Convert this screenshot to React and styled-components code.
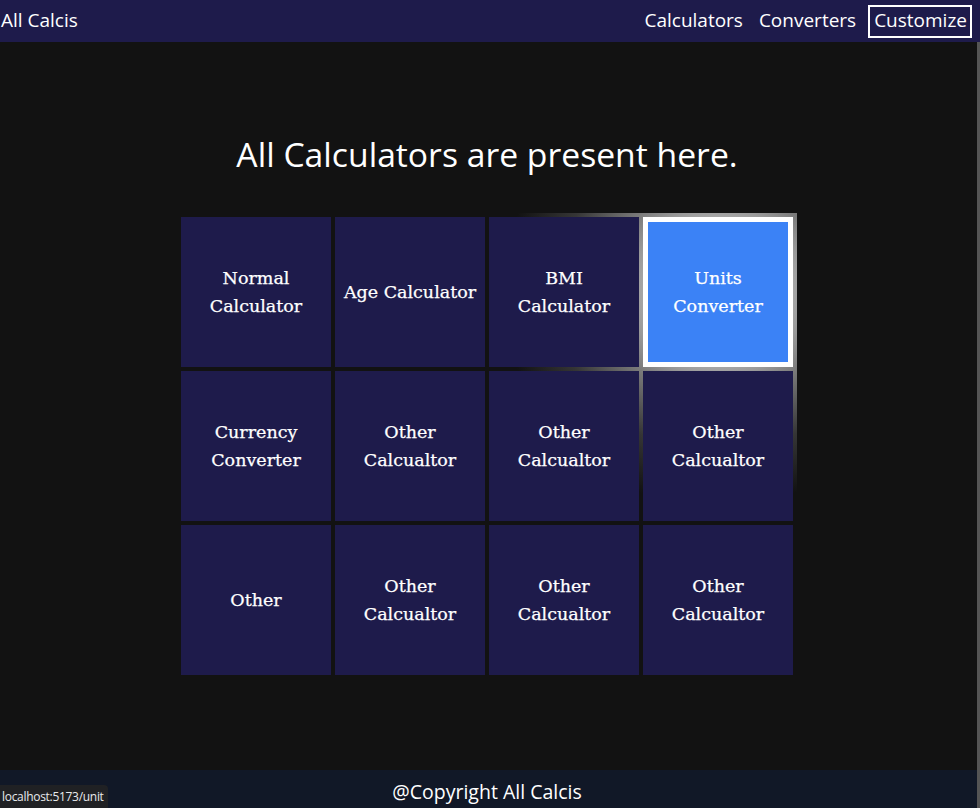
import React from 'react'
import styled, { createGlobalStyle } from 'styled-components'

const indigo = '#1e1b4b'
const page = '#121212'
const blue = '#3b82f6'

const GlobalStyle = createGlobalStyle`
  html, body {
    margin: 0;
    padding: 0;
    background: ${page};
    font-family: "Open Sans", "Noto Sans", sans-serif;
    color: #fff;
  }
  * { box-sizing: border-box; }
`

const Shell = styled.div`
  display: flex;
  flex-direction: column;
  height: 808px;
  overflow: hidden;
  position: relative;
`

const Nav = styled.nav`
  display: flex;
  justify-content: space-between;
  align-items: center;
  height: 42px;
  background: ${indigo};
  padding: 0 8px 0 0;
`

const Brand = styled.a`
  font-size: 19px;
  color: #fff;
  padding-left: 1px;
  padding-bottom: 2px;
`

const Links = styled.div`
  display: flex;
  align-items: center;
  gap: 12px;
`

const NavLink = styled.a`
  font-size: 19px;
  color: #fff;
  line-height: 27px;
  padding: ${p => (p.$active ? '0 3px 2px 4px' : '0 0 2px')};
  margin-left: ${p => (p.$active ? '-2px' : '0')};
  border: 2px solid ${p => (p.$active ? '#fff' : 'transparent')};
`

const Main = styled.main`
  flex: 1;
  display: flex;
  flex-direction: column;
  align-items: center;
  padding-right: 6px;
`

const Title = styled.h1`
  margin: 88px 0 35px;
  font-size: 33.7px;
  font-weight: 400;
  line-height: 48px;
`

const Board = styled.div`
  display: grid;
  grid-template-columns: repeat(4, 150px);
  grid-auto-rows: 150px;
  gap: 4px;
  padding: 4px;
  background: radial-gradient(
    circle 215px at 541px 79px,
    rgba(255, 255, 255, 0.95) 0%,
    rgba(200, 200, 200, 0.75) 40%,
    rgba(120, 120, 120, 0.35) 75%,
    rgba(18, 18, 18, 0) 100%
  ), ${page};
`

const Tile = styled.a`
  display: flex;
  align-items: center;
  justify-content: center;
  text-align: center;
  padding: 0 8px;
  background: ${p => (p.$active ? blue : indigo)};
  border: ${p => (p.$active ? '5px solid #fff' : 'none')};
  font-family: "DejaVu Serif", "Liberation Serif", serif;
  font-size: 17.5px;
  line-height: 28px;
  color: #fff;
  -webkit-text-stroke: 0.25px #fff;
  cursor: pointer;
`

const Footer = styled.footer`
  height: 38px;
  background: #111827;
  display: flex;
  justify-content: center;
  align-items: center;
  font-size: 19.5px;
  padding: 4px 6px 0 0;
`

const Status = styled.div`
  position: absolute;
  left: 0;
  bottom: 0;
  background: #202124;
  color: #e8eaed;
  font-size: 12px;
  padding: 3px 4px 3px 2px;
  border-top-right-radius: 4px;
  letter-spacing: -0.3px;
`

const Scroll = styled.div`
  position: absolute;
  right: 0;
  top: 42px;
  bottom: 0;
  width: 3px;
  background: #555;
`

const tiles = [
  'Normal Calculator',
  'Age Calculator',
  'BMI Calculator',
  'Units Converter',
  'Currency Converter',
  'Other Calcualtor',
  'Other Calcualtor',
  'Other Calcualtor',
  'Other',
  'Other Calcualtor',
  'Other Calcualtor',
  'Other Calcualtor',
]

const wrap = label => {
  if (label === 'Age Calculator' || label === 'Other') return label
  const [a, ...b] = label.split(' ')
  return (
    <>
      {a}
      <br />
      {b.join(' ')}
    </>
  )
}

export default function App() {
  return (
    <Shell>
      <GlobalStyle />
      <Nav>
        <Brand>All Calcis</Brand>
        <Links>
          <NavLink>Calculators</NavLink>
          <NavLink>Converters</NavLink>
          <NavLink $active>Customize</NavLink>
        </Links>
      </Nav>
      <Main>
        <Title>All Calculators are present here.</Title>
        <Board>
          {tiles.map((t, i) => (
            <Tile key={i} $active={i === 3}>
              <span>{wrap(t)}</span>
            </Tile>
          ))}
        </Board>
      </Main>
      <Footer>@Copyright All Calcis</Footer>
      <Status>localhost:5173/unit</Status>
      <Scroll />
    </Shell>
  )
}
